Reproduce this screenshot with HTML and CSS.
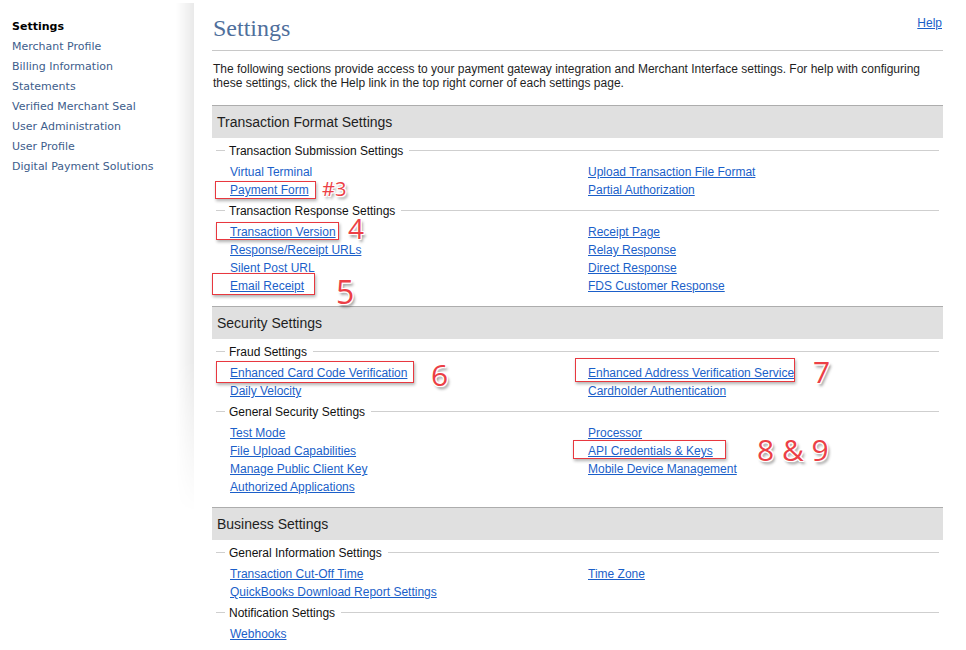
FILE: index.html
```html
<!DOCTYPE html>
<html lang="en">
<head>
<meta charset="utf-8">
<title>Settings</title>
<link rel="stylesheet" href="styles.css">
</head>
<body>
<div class="page">
  <nav class="sidebar">
    <ul class="side-list">
      <li class="side-current">Settings</li>
      <li><a href="#">Merchant Profile</a></li>
      <li><a href="#">Billing Information</a></li>
      <li><a href="#">Statements</a></li>
      <li><a href="#">Verified Merchant Seal</a></li>
      <li><a href="#">User Administration</a></li>
      <li><a href="#">User Profile</a></li>
      <li><a href="#">Digital Payment Solutions</a></li>
    </ul>
  </nav>

  <main class="main">
    <header class="page-head">
      <h1 class="page-title">Settings</h1>
      <a class="help" href="#">Help</a>
    </header>
    <p class="intro">The following sections provide access to your payment gateway integration and Merchant Interface settings. For help with configuring these settings, click the Help link in the top right corner of each settings page.</p>

    <section class="section">
      <h2 class="section-bar">Transaction Format Settings</h2>
      <div class="group">
        <div class="group-title"><span>Transaction Submission Settings</span></div>
        <div class="links">
          <ul class="col">
            <li><a class="plain" href="#">Virtual Terminal</a></li>
            <li><a href="#">Payment Form</a></li>
          </ul>
          <ul class="col">
            <li><a href="#">Upload Transaction File Format</a></li>
            <li><a href="#">Partial Authorization</a></li>
          </ul>
        </div>
      </div>
      <div class="group">
        <div class="group-title"><span>Transaction Response Settings</span></div>
        <div class="links">
          <ul class="col">
            <li><a href="#">Transaction Version</a></li>
            <li><a href="#">Response/Receipt URLs</a></li>
            <li><a class="plain" href="#">Silent Post URL</a></li>
            <li><a href="#">Email Receipt</a></li>
          </ul>
          <ul class="col">
            <li><a href="#">Receipt Page</a></li>
            <li><a href="#">Relay Response</a></li>
            <li><a href="#">Direct Response</a></li>
            <li><a href="#">FDS Customer Response</a></li>
          </ul>
        </div>
      </div>
    </section>

    <section class="section">
      <h2 class="section-bar">Security Settings</h2>
      <div class="group">
        <div class="group-title"><span>Fraud Settings</span></div>
        <div class="links">
          <ul class="col">
            <li><a href="#">Enhanced Card Code Verification</a></li>
            <li><a href="#">Daily Velocity</a></li>
          </ul>
          <ul class="col">
            <li><a href="#">Enhanced Address Verification Service</a></li>
            <li><a href="#">Cardholder Authentication</a></li>
          </ul>
        </div>
      </div>
      <div class="group">
        <div class="group-title"><span>General Security Settings</span></div>
        <div class="links">
          <ul class="col">
            <li><a href="#">Test Mode</a></li>
            <li><a href="#">File Upload Capabilities</a></li>
            <li><a href="#">Manage Public Client Key</a></li>
            <li><a href="#">Authorized Applications</a></li>
          </ul>
          <ul class="col">
            <li><a href="#">Processor</a></li>
            <li><a href="#">API Credentials &amp; Keys</a></li>
            <li><a href="#">Mobile Device Management</a></li>
          </ul>
        </div>
      </div>
    </section>

    <section class="section">
      <h2 class="section-bar">Business Settings</h2>
      <div class="group">
        <div class="group-title"><span>General Information Settings</span></div>
        <div class="links">
          <ul class="col">
            <li><a href="#">Transaction Cut-Off Time</a></li>
            <li><a href="#">QuickBooks Download Report Settings</a></li>
          </ul>
          <ul class="col">
            <li><a href="#">Time Zone</a></li>
          </ul>
        </div>
      </div>
      <div class="group">
        <div class="group-title"><span>Notification Settings</span></div>
        <div class="links">
          <ul class="col">
            <li><a href="#">Webhooks</a></li>
          </ul>
        </div>
      </div>
    </section>
  </main>

  <div class="mark box-payment"></div>
  <div class="mark box-version"></div>
  <div class="mark box-email"></div>
  <div class="mark box-card"></div>
  <div class="mark box-address"></div>
  <div class="mark box-api"></div>

  <span class="num num-3">#3</span>
  <span class="num num-4">4</span>
  <span class="num num-5">5</span>
  <span class="num num-6">6</span>
  <span class="num num-7">7</span>
  <span class="num num-89">8 &amp; 9</span>
</div>
</body>
</html>
```

FILE: styles.css
```css
* { box-sizing: border-box; }

html, body {
  margin: 0;
  padding: 0;
  background: #fff;
}

body {
  font-family: "Liberation Sans", Arial, sans-serif;
  font-size: 12px;
  color: #222;
}

.page {
  position: relative;
  display: flex;
  align-items: flex-start;
  min-height: 650px;
}

/* Sidebar */
.sidebar {
  position: relative;
  flex: none;
  width: 194px;
  min-height: 512px;
  padding: 17px 0 0 12px;
}

.sidebar::after {
  content: "";
  position: absolute;
  top: 3px;
  right: 0;
  width: 18px;
  height: 510px;
  background: linear-gradient(to right, rgba(0,0,0,0), rgba(0,0,0,0.085));
  -webkit-mask-image: linear-gradient(to bottom, #000 0%, #000 70%, transparent 100%);
  mask-image: linear-gradient(to bottom, #000 0%, #000 70%, transparent 100%);
}

.side-list {
  list-style: none;
  margin: 0;
  padding: 0;
  font-family: "DejaVu Sans", Verdana, sans-serif;
  font-size: 11px;
  line-height: 20px;
}

.side-list a {
  color: #3d5d8b;
  text-decoration: none;
}

.side-current {
  font-weight: bold;
  color: #000;
}

/* Main */
.main {
  flex: none;
  width: 731px;
  margin-left: 18px;
}

.page-head {
  display: flex;
  justify-content: space-between;
  align-items: flex-start;
  padding: 14px 1px 8px 1px;
  border-bottom: 1px solid #c8c8c8;
}

.page-title {
  margin: 0;
  font-family: "Liberation Serif", Georgia, serif;
  font-weight: normal;
  font-size: 24px;
  line-height: 28px;
  color: #4f6f9c;
}

.help {
  margin-top: 2px;
  font-size: 12px;
  line-height: 14px;
  color: #1b5fc9;
}

.intro {
  margin: 11px 0 15px;
  padding-left: 1px;
  font-size: 12px;
  line-height: 14px;
  color: #1f1f1f;
}

/* Sections */
.section {
  padding-bottom: 7px;
}

.section-bar {
  margin: 0 0 5px;
  height: 33px;
  padding-left: 5px;
  border-top: 1px solid #adadad;
  background: #e0e0e0;
  font-size: 14px;
  font-weight: normal;
  line-height: 32px;
  color: #1e1e1e;
}

.group {
  margin: 0 4px;
}

.group-title {
  display: flex;
  align-items: center;
  height: 14px;
  line-height: 14px;
  font-size: 12px;
  color: #111;
}

.group-title span {
  padding-top: 2px;
}

.group-title::before {
  content: "";
  flex: none;
  width: 9px;
  height: 1px;
  margin-right: 4px;
  background: #cfcfcf;
}

.group-title::after {
  content: "";
  flex: 1;
  height: 1px;
  margin-left: 6px;
  background: #cfcfcf;
}

.links {
  display: grid;
  grid-template-columns: 358px 1fr;
  padding: 6px 0 4px 14px;
}

.col {
  list-style: none;
  margin: 0;
  padding: 0;
  line-height: 18px;
}

.col a {
  color: #1b5fc9;
  text-decoration: underline;
}

.col a.plain {
  text-decoration: none;
}

/* Annotation overlays */
.mark {
  position: absolute;
  border: 1px solid #e8383f;
  box-shadow: 1px 2px 3px rgba(0, 0, 0, 0.3);
}

.box-payment { left: 215px; top: 181px; width: 101px; height: 18px; }
.box-version { left: 216px; top: 222px; width: 123px; height: 18px; }
.box-email   { left: 212px; top: 273px; width: 103px; height: 22px; }
.box-card    { left: 216px; top: 361px; width: 198px; height: 22px; }
.box-address { left: 575px; top: 358px; width: 220px; height: 24px; }
.box-api     { left: 573px; top: 440px; width: 153px; height: 19px; }

.num {
  position: absolute;
  font-family: "Open Sans", "DejaVu Sans", sans-serif;
  line-height: 1;
  color: #ec3f46;
  white-space: nowrap;
  text-shadow:
    1px 0 0 #fff, -1px 0 0 #fff, 0 1px 0 #fff, 0 -1px 0 #fff,
    1px 1px 0 #fff, -1px -1px 0 #fff, 1px -1px 0 #fff, -1px 1px 0 #fff,
    2px 3px 3px rgba(0, 0, 0, 0.45);
}

.num-3  { left: 322px; top: 179px; font-size: 20px; }
.num-4  { left: 348px; top: 214px; font-size: 28px; }
.num-5  { left: 336px; top: 276px; font-size: 32px; }
.num-6  { left: 431px; top: 360px; font-size: 30px; }
.num-7  { left: 813px; top: 357px; font-size: 30px; }
.num-89 { left: 757px; top: 435px; font-size: 30px; }
```
